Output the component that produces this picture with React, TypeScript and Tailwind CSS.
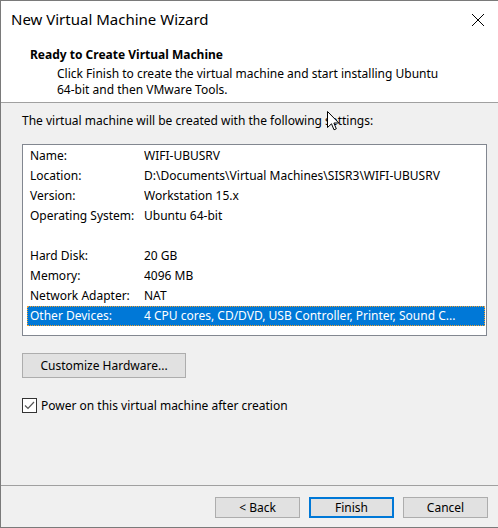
import React from 'react';

const rows: { label: string; value: string; selected?: boolean }[] = [
  { label: 'Name:', value: 'WIFI-UBUSRV' },
  { label: 'Location:', value: 'D:\\Documents\\Virtual Machines\\SISR3\\WIFI-UBUSRV' },
  { label: 'Version:', value: 'Workstation 15.x' },
  { label: 'Operating System:', value: 'Ubuntu 64-bit' },
  { label: '', value: '' },
  { label: 'Hard Disk:', value: '20 GB' },
  { label: 'Memory:', value: '4096 MB' },
  { label: 'Network Adapter:', value: 'NAT' },
  // list column is clipped with an ellipsis by the wizard itself
  { label: 'Other Devices:', value: '4 CPU cores, CD/DVD, USB Controller, Printer, Sound C...', selected: true },
];

const font = { fontFamily: '"Noto Sans", "Segoe UI", sans-serif' };

const Cursor = () => (
  <svg width="13" height="20" viewBox="0 0 13 20" className="absolute left-[326px] top-[110px]">
    <path d="M0.5 0.5 L0.5 16.5 L4.5 12.8 L7 18.8 L9.3 17.8 L6.9 12 L11.8 12 Z" fill="#fff" stroke="#000" strokeWidth="1" strokeLinejoin="miter" />
  </svg>
);

const WinButton: React.FC<{ children: React.ReactNode; primary?: boolean; className?: string }> = ({ children, primary, className }) => (
  <button
    className={`h-[21px] w-[85px] bg-[#e1e1e1] text-[12px] text-black leading-none flex items-center justify-center ${
      primary ? 'border-2 border-[#0078d7]' : 'border border-[#adadad]'
    } ${className ?? ''}`}
  >
    {children}
  </button>
);

export default function App() {
  return (
    <div
      className="relative w-[498px] h-[528px] flex flex-col bg-[#f0f0f0] border-l border-t border-b border-[#7a7a7a] text-[12px] text-black overflow-hidden"
      style={font}
    >
      {/* title bar */}
      <div className="h-[37px] bg-white flex items-center justify-between pl-[10px] pr-[13px]">
        <span className="text-[15px] leading-none">New Virtual Machine Wizard</span>
        <svg width="14" height="14" viewBox="0 0 14 14">
          <path d="M1 1 L13 13 M13 1 L1 13" stroke="#000" strokeWidth="1" />
        </svg>
      </div>

      {/* page header */}
      <div className="h-[65px] bg-white border-b border-[#a0a0a0] pl-[29px] pt-[9px]">
        <div className="font-bold text-[12px] leading-[16px]">Ready to Create Virtual Machine</div>
        <div className="pl-[27px] mt-[3px] leading-[16px] w-[420px]">
          Click Finish to create the virtual machine and start installing Ubuntu 64-bit and then VMware Tools.
        </div>
      </div>

      {/* body */}
      <div className="flex-1 flex flex-col pl-[21px] pr-[11px] pt-[10px]">
        <div className="leading-[16px]">The virtual machine will be created with the following settings:</div>

        <div className="mt-[15px] h-[192px] bg-white border border-[#828790] pt-[1px] pl-[4px] pr-[1px]">
          {rows.map((r, i) => (
            <div
              key={i}
              className={`h-[20px] flex items-center pl-[3px] whitespace-nowrap ${
                r.selected ? 'bg-[#0078d7] text-white outline-1 outline-dotted outline-[#f0a030] -outline-offset-1' : ''
              }`}
            >
              <span className="w-[114px] shrink-0">{r.label}</span>
              <span className="truncate pr-[10px]">{r.value}</span>
            </div>
          ))}
        </div>

        <button className="mt-[17px] w-[164px] h-[25px] bg-[#e1e1e1] border border-[#adadad] flex items-center justify-center">
          Customize Hardware...
        </button>

        <label className="mt-[20px] h-[15px] flex items-center gap-[4px]">
          <span className="w-[15px] h-[15px] border border-[#333] bg-white flex items-center justify-center">
            <svg width="11" height="9" viewBox="0 0 11 9">
              <path d="M1 4.5 L4 7.5 L10 1" fill="none" stroke="#555" strokeWidth="1.2" />
            </svg>
          </span>
          <span>Power on this virtual machine after creation</span>
        </label>
      </div>

      {/* footer */}
      <div className="h-[42px] border-t border-[#a0a0a0] flex items-start justify-end gap-[9px] pr-[10px] pt-[11px]">
        <WinButton>&lt; Back</WinButton>
        <WinButton primary>Finish</WinButton>
        <WinButton>Cancel</WinButton>
      </div>

      <Cursor />
    </div>
  );
}
